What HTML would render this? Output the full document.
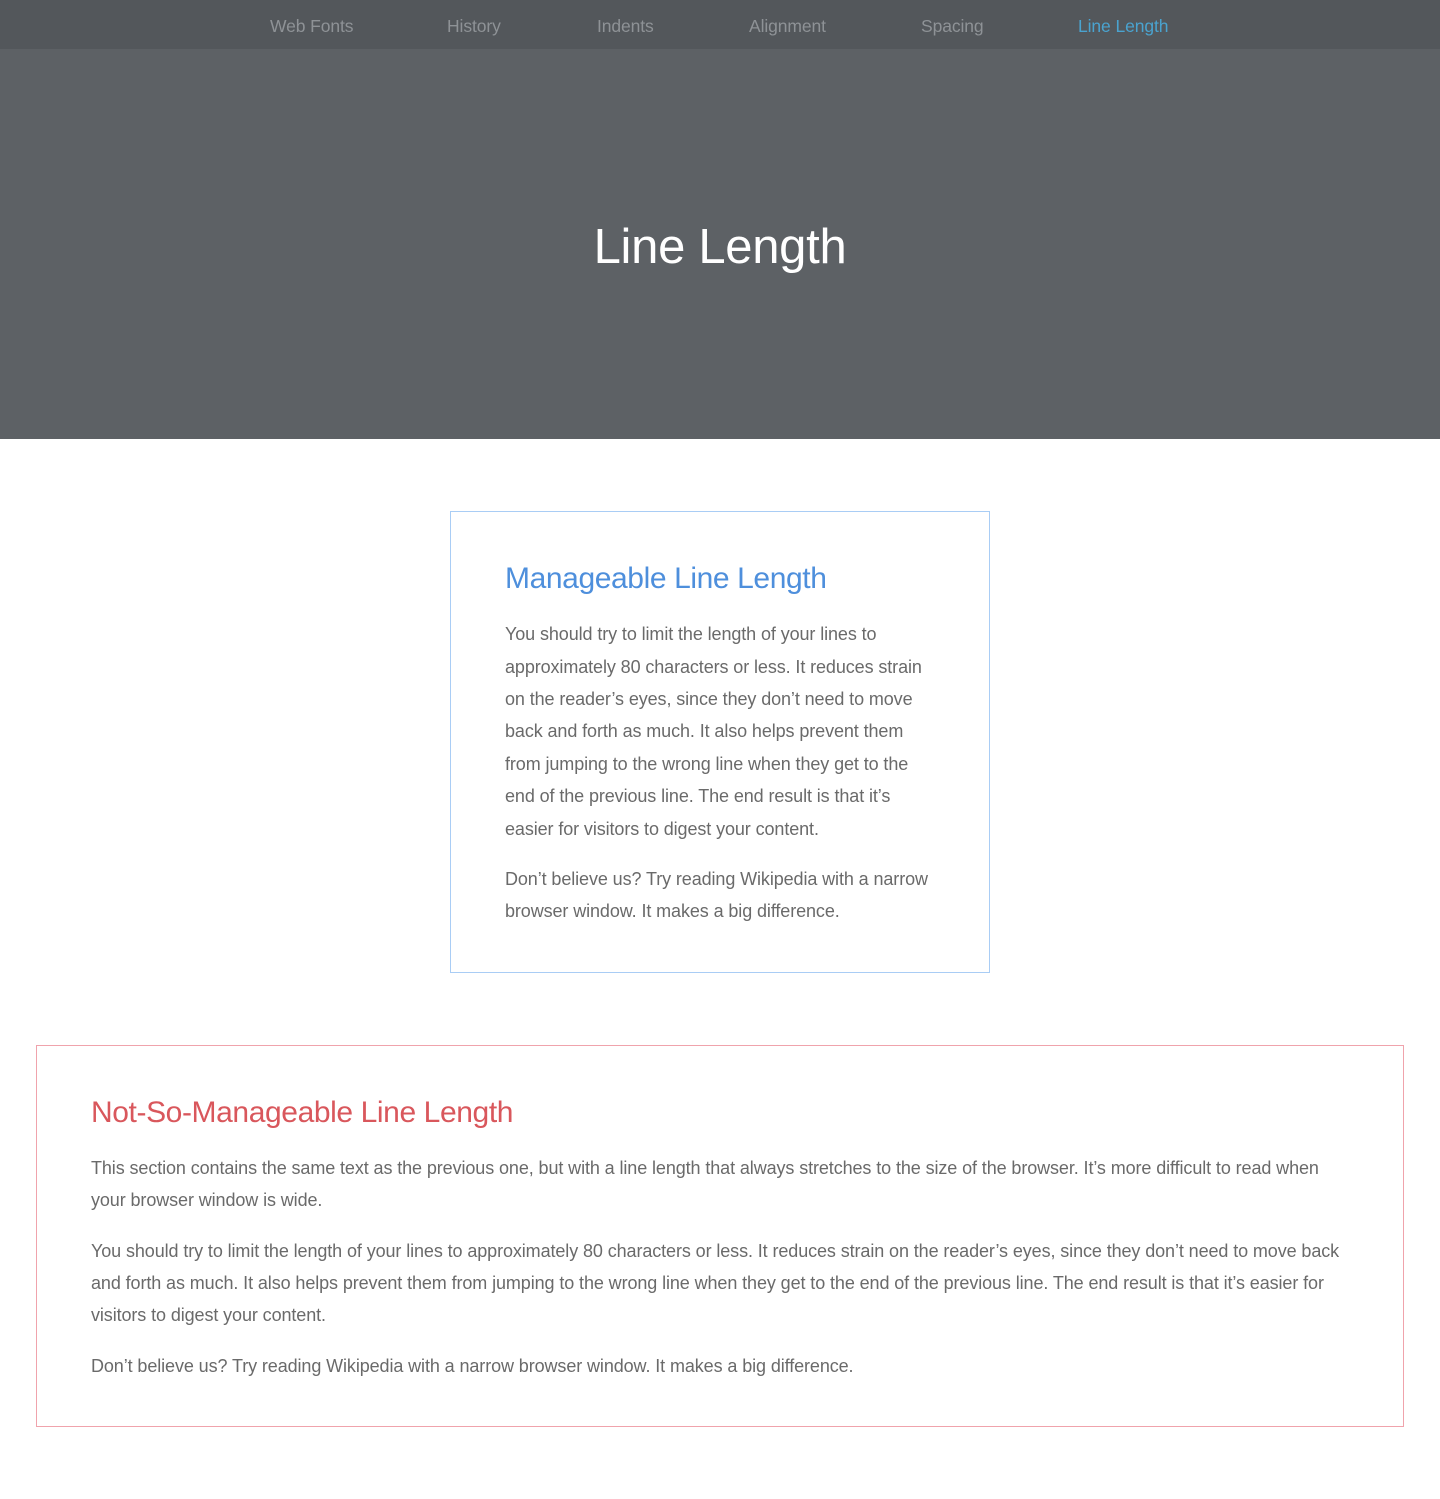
<!DOCTYPE html>
<html><head><meta charset="utf-8"><style>
*{margin:0;padding:0;box-sizing:border-box}
body{width:1440px;height:1499px;background:#fff;font-family:"Liberation Sans",sans-serif;color:#6a6a6a;position:relative;overflow:hidden}
nav{position:absolute;top:0;left:0;width:1440px;height:49px;background:#53575b}
nav span{position:absolute;top:16px;font-size:17.5px;color:#8e9296;white-space:nowrap;letter-spacing:-0.1px}
.hero{position:absolute;top:49px;left:0;width:1440px;height:390px;background:#5d6165}
.hero h1{position:absolute;top:170px;width:100%;text-align:center;font-weight:normal;color:#fff;font-size:49px;letter-spacing:-0.3px}
.box{position:absolute;border:1px solid}
.l{position:absolute;white-space:nowrap;font-size:18px;letter-spacing:-0.1px;margin-top:1px}
h2{position:absolute;font-weight:normal;font-size:30px;white-space:nowrap;letter-spacing:-0.4px;margin-top:1px}
</style></head><body>
<nav>
<span style="left:270px">Web Fonts</span>
<span style="left:447px">History</span>
<span style="left:597px">Indents</span>
<span style="left:749px">Alignment</span>
<span style="left:921px">Spacing</span>
<span style="left:1078px;color:#4aa3cf">Line Length</span>
</nav>
<div class="hero"><h1>Line Length</h1></div>

<div class="box" style="left:450px;top:511px;width:540px;height:462px;border-color:#a9cdf5"></div>
<h2 style="left:505px;top:561px;color:#4e8fdc">Manageable Line Length</h2>
<div class="l" style="left:505px;top:623px">You should try to limit the length of your lines to</div>
<div class="l" style="left:505px;top:656px">approximately 80 characters or less. It reduces strain</div>
<div class="l" style="left:505px;top:688px">on the reader’s eyes, since they don’t need to move</div>
<div class="l" style="left:505px;top:720px">back and forth as much. It also helps prevent them</div>
<div class="l" style="left:505px;top:753px">from jumping to the wrong line when they get to the</div>
<div class="l" style="left:505px;top:785px">end of the previous line. The end result is that it’s</div>
<div class="l" style="left:505px;top:818px">easier for visitors to digest your content.</div>
<div class="l" style="left:505px;top:868px">Don’t believe us? Try reading Wikipedia with a narrow</div>
<div class="l" style="left:505px;top:900px">browser window. It makes a big difference.</div>

<div class="box" style="left:36px;top:1045px;width:1368px;height:382px;border-color:#f0a3ac"></div>
<h2 style="left:91px;top:1095px;color:#d9575c">Not-So-Manageable Line Length</h2>
<div class="l" style="left:91px;top:1157px">This section contains the same text as the previous one, but with a line length that always stretches to the size of the browser. It’s more difficult to read when</div>
<div class="l" style="left:91px;top:1189px">your browser window is wide.</div>
<div class="l" style="left:91px;top:1240px">You should try to limit the length of your lines to approximately 80 characters or less. It reduces strain on the reader’s eyes, since they don’t need to move back</div>
<div class="l" style="left:91px;top:1272px">and forth as much. It also helps prevent them from jumping to the wrong line when they get to the end of the previous line. The end result is that it’s easier for</div>
<div class="l" style="left:91px;top:1304px">visitors to digest your content.</div>
<div class="l" style="left:91px;top:1355px">Don’t believe us? Try reading Wikipedia with a narrow browser window. It makes a big difference.</div>
</body></html>
